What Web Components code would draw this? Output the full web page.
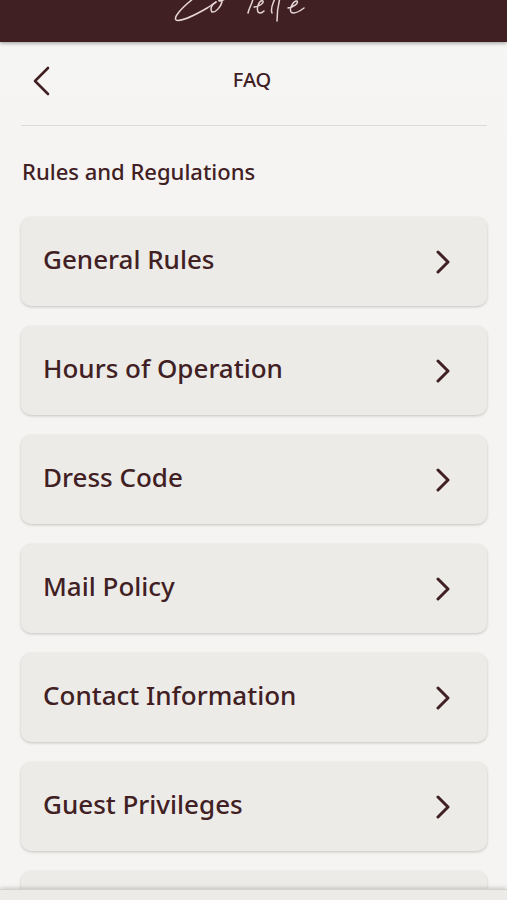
<!DOCTYPE html>
<html lang="en">
<head>
<meta charset="utf-8">
<meta name="viewport" content="width=device-width, initial-scale=1">
<title>FAQ</title>
<style>
body { margin: 0; font-family: "Noto Sans", sans-serif; color: #412024; background: #f5f4f2; }
</style>
</head>
<body>
<faq-page>
  <brand-bar slot="header"></brand-bar>
  <page-title slot="title">FAQ</page-title>
  <faq-section heading="Rules and Regulations">
    <faq-card>General Rules</faq-card>
    <faq-card>Hours of Operation</faq-card>
    <faq-card>Dress Code</faq-card>
    <faq-card>Mail Policy</faq-card>
    <faq-card>Contact Information</faq-card>
    <faq-card>Guest Privileges</faq-card>
    <faq-card></faq-card>
  </faq-section>
</faq-page>
<script>
function define(name, markup, setup) {
  customElements.define(name, class extends HTMLElement {
    constructor() {
      super();
      this.attachShadow({ mode: "open" }).innerHTML = markup;
    }
    connectedCallback() { if (setup) setup(this); }
  });
}

define("faq-page", `
<style>
:host { display: flex; flex-direction: column; height: 100vh; background: linear-gradient(#f6f6f6, #f5f4f2 160px); }
main { flex: 1; min-height: 0; overflow: hidden; padding: 0 20px 0 21px; }
footer { flex: none; height: 11px; background: #ecebe7; border-top: 1px solid #d2d1ce; box-shadow: 0 -1px 4px rgba(0,0,0,.18); position: relative; box-sizing: border-box; }
</style>
<slot name="header"></slot>
<main><slot name="title"></slot><slot></slot></main>
<footer></footer>`);

define("brand-bar", `
<style>
:host { display: block; flex: none; }
header { display: flex; justify-content: center; padding-right: 27px; height: 42px; background: #412024; box-shadow: 0 1px 4px rgba(0,0,0,.4); }
svg { display: block; fill: none; stroke: #e6d5d3; stroke-linecap: round; stroke-linejoin: round; }
</style>
<header>
<svg width="160" height="42" viewBox="0 0 160 42" role="img" aria-label="Logo" stroke-width="1.5">
  <path d="M34 -2C29 2 23 7 19 12C15 17 14 20 18 20.500C24 20 37 14 48 7.500L56 2"/>
  <path d="M56 2C51 5 50 9 52 12C56 13 61 6 62 2C62 0 61 -1 59 0C58 2 62 1 65 -1"/>
  <path d="M93 -1C92 4 89 8 88 13"/>
  <path d="M94 7C99 7 104 3 103 1C100 -1 96 7 98 12C100 14 102 13 104 11"/>
  <path d="M115 -2C113 4 110 8 112 13"/>
  <path d="M120 -2C118 5 117 14 117 21"/>
  <path d="M128 8C134 7 139 3 137 1C134 0 129 8 131 12C134 15 140 11 144 8"/>
</svg>
</header>`);

define("page-title", `
<style>
:host { display: grid; grid-template-columns: 40px 1fr 44px; align-items: center; height: 83px; border-bottom: 1px solid #dcdbda; }
button { display: flex; justify-content: center; align-items: center; height: 44px; margin: 0; padding: 0; border: 0; background: none; color: inherit; }
svg { display: block; fill: none; stroke: currentColor; stroke-width: 2.6; stroke-linecap: round; stroke-linejoin: round; }
h1 { margin: 0; padding-bottom: 8px; font-size: 20px; line-height: 28px; font-weight: 500; text-align: center; }
</style>
<button type="button" aria-label="Back"><svg width="24" height="36" viewBox="0 0 24 36"><path d="M19 2L6 15L19 28"/></svg></button>
<h1><slot></slot></h1>`);

define("faq-section", `
<style>
:host { display: block; }
h2 { margin: 0; padding: 30px 1px 31px; font-size: 22px; line-height: 30px; font-weight: 500; }
div { display: flex; flex-direction: column; gap: 20px; }
</style>
<h2></h2><div><slot></slot></div>`,
el => { el.shadowRoot.querySelector("h2").textContent = el.getAttribute("heading"); });

define("faq-card", `
<style>
:host { display: block; }
button { display: flex; justify-content: space-between; align-items: center; width: 100%; height: 89px; margin: 0; padding: 0 36px 5px 22px; border: 0; border-radius: 10px; background: #ecebe7; box-shadow: 0 1px 3px rgba(0,0,0,.2); color: inherit; font: 500 26px/36px "Noto Sans", sans-serif; text-align: left; }
svg { display: block; flex: none; fill: none; stroke: currentColor; stroke-width: 3; stroke-linecap: round; stroke-linejoin: round; }
</style>
<button type="button"><span><slot></slot></span><svg width="16" height="30" viewBox="0 0 16 30" aria-hidden="true"><path d="M3 8L13 18L3 28"/></svg></button>`);
</script>
</body>
</html>
